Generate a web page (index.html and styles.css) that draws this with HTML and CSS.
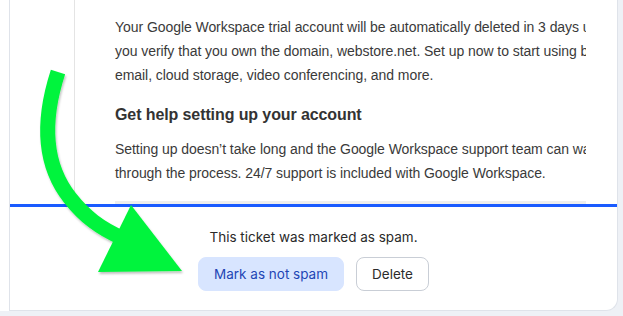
FILE: index.html
```html
<!DOCTYPE html>
<html lang="en">
<head>
<meta charset="utf-8">
<title>Ticket</title>
<link rel="stylesheet" href="styles.css">
</head>
<body>
<div class="shell">
  <div class="side"></div>
  <div class="panel">
    <div class="viewer">
      <div class="gutter"></div>
      <div class="frame">
        <div class="content">
          <p class="para">Your Google Workspace trial account will be automatically deleted in 3 days unless<br>you verify that you own the domain, webstore.net. Set up now to start using business<br>email, cloud storage, video conferencing, and more.</p>
          <h2 class="heading">Get help setting up your account</h2>
          <p class="para">Setting up doesn’t take long and the Google Workspace support team can walk you<br>through the process. 24/7 support is included with Google Workspace.</p>
          <div class="rule"></div>
        </div>
      </div>
    </div>
    <div class="divider"></div>
    <div class="footer">
      <div class="notice">This ticket was marked as spam.</div>
      <div class="actions">
        <button class="btn btn-primary">Mark as not spam</button>
        <button class="btn btn-outline">Delete</button>
      </div>
    </div>
  </div>
</div>
<svg class="arrow" width="623" height="316" viewBox="0 0 623 316">
  <defs>
    <filter id="sh" x="-20%" y="-20%" width="140%" height="140%">
      <feDropShadow dx="1" dy="2" stdDeviation="1.2" flood-color="#000" flood-opacity="0.25"/>
    </filter>
  </defs>
  <g filter="url(#sh)">
    <path d="M58 72 C45 112 40 160 70 198 C85 217 100 228 122 238" fill="none" stroke="#00f43c" stroke-width="15"/>
    <polygon points="131,205 98,272 182,271" fill="#00f43c"/>
  </g>
</svg>
</body>
</html>
```
FILE: styles.css
```css
html, body {
  margin: 0;
  padding: 0;
}
body {
  width: 623px;
  height: 316px;
  overflow: hidden;
  background: #eef1f6;
  position: relative;
}
.shell {
  display: flex;
  height: 311px;
}
.side {
  width: 9px;
  background: #ffffff;
}
.panel {
  width: 607px;
  background: #ffffff;
  border-left: 1px solid #dfe3ea;
  border-right: 1px solid #dfe3ea;
  border-bottom: 1px solid #dfe3ea;
  border-bottom-right-radius: 12px;
  display: flex;
  flex-direction: column;
}
.viewer {
  display: flex;
  height: 204px;
}
.gutter {
  width: 64px;
}
.frame {
  width: 511px;
  border-left: 1px solid #e4e4e4;
  overflow: hidden;
}
.content {
  padding: 15px 0 0 40px;
  font-family: "Liberation Sans", Arial, sans-serif;
  color: #3a3a3a;
}
.para {
  margin: 0;
  font-size: 14px;
  line-height: 24px;
  letter-spacing: -0.06px;
  white-space: nowrap;
}
.heading {
  margin: 16px 0 10px;
  font-size: 16px;
  line-height: 24px;
  letter-spacing: -0.1px;
  font-weight: bold;
  color: #333333;
  white-space: nowrap;
}
.rule {
  margin-top: 16px;
  height: 3px;
  background: #eeeeee;
}
.divider {
  height: 3px;
  background: #1a5bff;
}
.footer {
  flex: 1;
  padding-top: 20px;
  display: flex;
  flex-direction: column;
  align-items: center;
  font-family: "Inter", "Lato", sans-serif;
}
.notice {
  font-size: 13.5px;
  line-height: 20px;
  color: #2a2a2a;
}
.actions {
  margin-top: 10px;
  display: flex;
  gap: 12px;
}
.btn {
  height: 34px;
  padding: 0 15px;
  border-radius: 8px;
  font-family: "Inter", "Lato", sans-serif;
  font-size: 13.5px;
  cursor: pointer;
}
.btn-primary {
  background: #d8e5ff;
  color: #1f45b5;
  border: 1px solid #d8e5ff;
}
.btn-outline {
  background: #ffffff;
  color: #2b2b2b;
  border: 1px solid #c9ced6;
}
.arrow {
  position: absolute;
  left: 0;
  top: 0;
  pointer-events: none;
}
```
